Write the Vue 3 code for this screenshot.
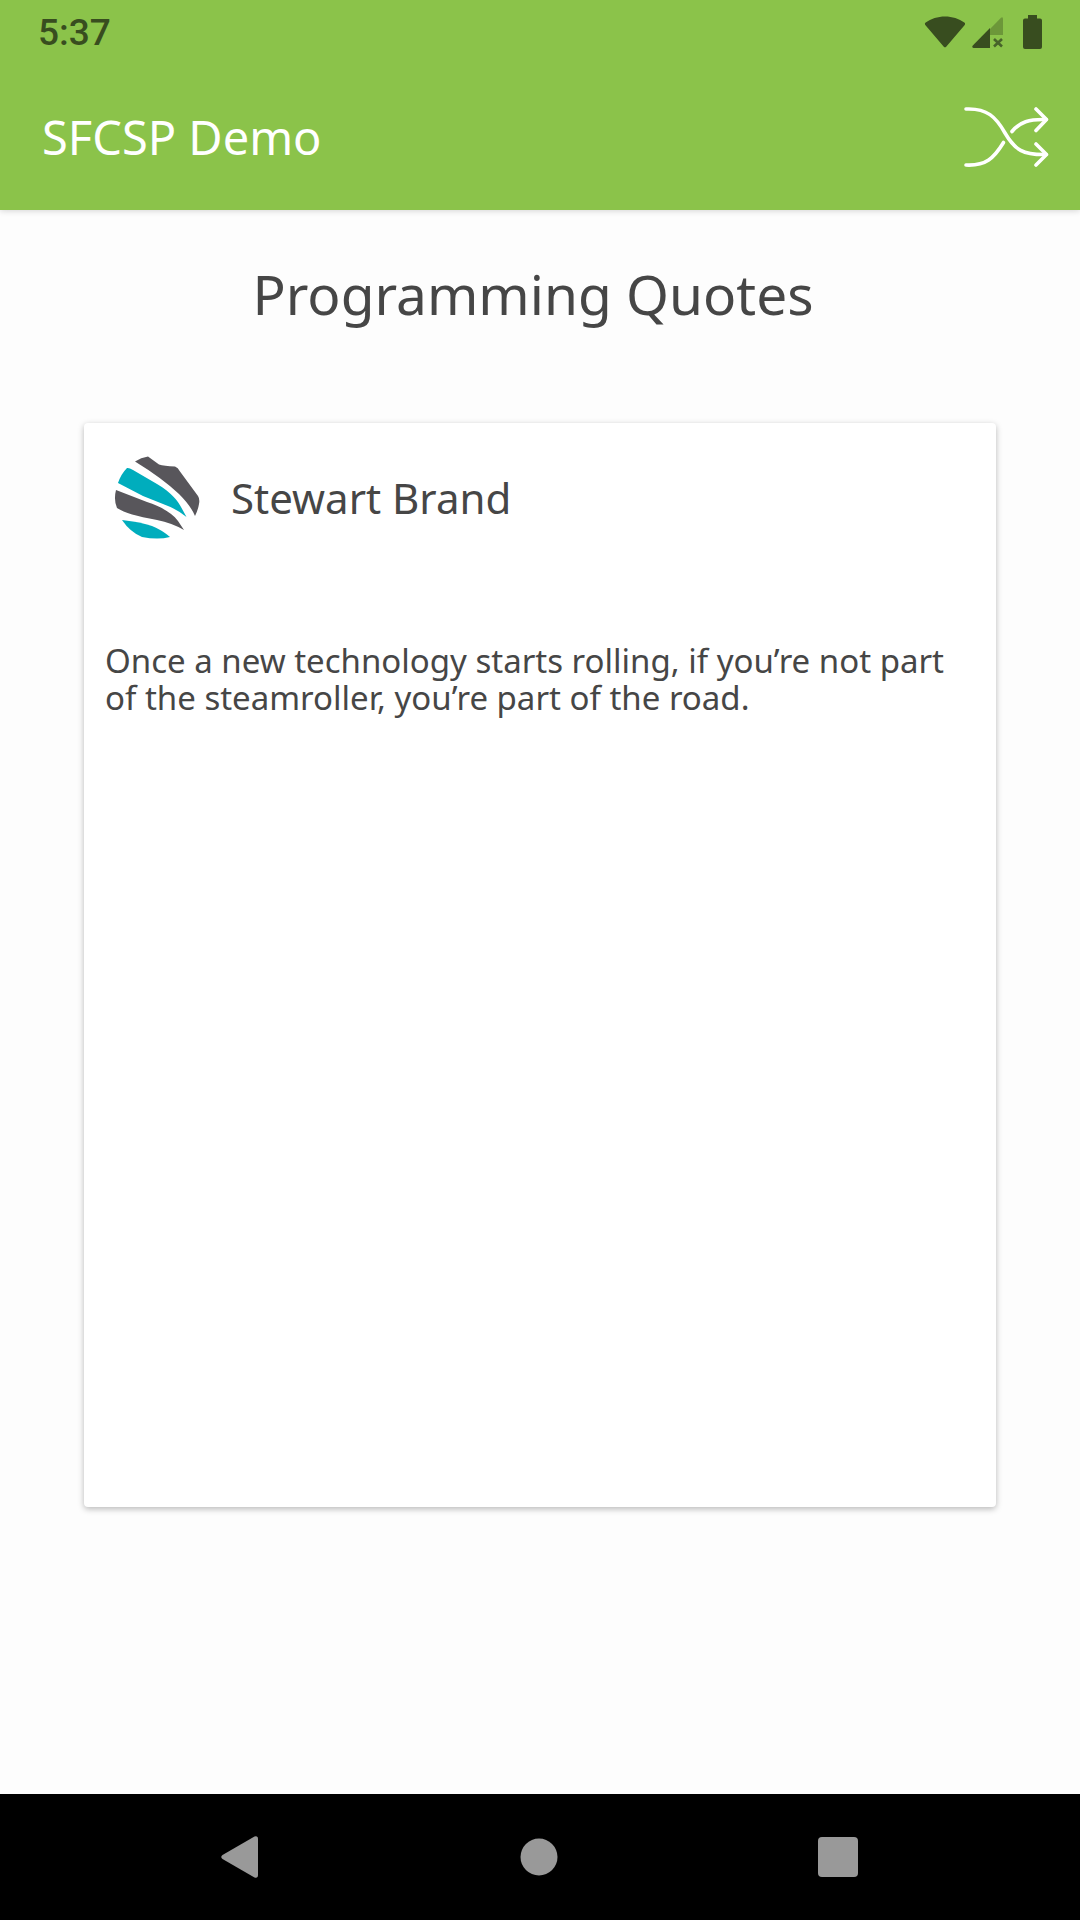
<script setup>
import { ref } from 'vue'

const quotes = [
  {
    author: 'Stewart Brand',
    text: 'Once a new technology starts rolling, if you’re not part of the steamroller, you’re part of the road.',
  },
]
const current = ref(0)

function shuffle() {
  current.value = Math.floor(Math.random() * quotes.length)
}
</script>

<template>
  <div class="screen">
    <header class="top">
      <div class="status">
        <time class="clock">5:37</time>
        <div class="indicators">
          <svg width="42" height="32" viewBox="0 0 42 32" aria-label="Wi-Fi">
            <path d="M1.5 9.2C.6 8.4.7 7.2 1.7 6.6C7 2.7 13.8 .5 21 .5S35 2.7 40.3 6.6C41.3 7.2 41.4 8.4 40.5 9.2L22.2 30.7Q21 32 19.8 30.7Z" fill="#384d1f" />
          </svg>
          <svg width="31" height="32" viewBox="0 0 31 32" aria-label="No mobile data">
            <path d="M18 13L29 1.8Q31 .5 31 3V19H18Z" fill="#6c9739" />
            <path d="M18 12V32H1.5Q-.6 31.5 .8 29.5Z" fill="#384d1f" />
            <path d="M22 23L30 30.5M30 23L22 30.5" stroke="#47632a" stroke-width="2.6" fill="none" />
          </svg>
          <svg width="19" height="34" viewBox="0 0 19 34" aria-label="Battery full">
            <path d="M5 0H14V3.5H17Q19 3.5 19 5.5V32Q19 34 17 34H2Q0 34 0 32V5.5Q0 3.5 2 3.5H5Z" fill="#384d1f" />
          </svg>
        </div>
      </div>
      <div class="app-bar">
        <h1 class="app-name">SFCSP Demo</h1>
        <button class="shuffle" type="button" aria-label="Shuffle quote" @click="shuffle">
          <svg width="86" height="62" viewBox="0 0 86 62">
            <g fill="none" stroke="#fff" stroke-width="3.6" stroke-linecap="round" stroke-linejoin="round">
              <path d="M3 3C24 2 33 11 42 27C52 44 60 49 83 48.5" />
              <path d="M3 59C23 60 31 52 40.5 36.5" />
              <path d="M49 25.5C57 16 66 13 83 13.5" />
              <path d="M73 3L83.5 13.5L73 24.5" />
              <path d="M73 38L83.5 48.5L73 59" />
            </g>
          </svg>
        </button>
      </div>
    </header>

    <main class="content">
      <h2 class="title">Programming Quotes</h2>
      <article class="card">
        <div class="author">
          <svg class="logo" width="86" height="84" viewBox="0 0 86 84" aria-hidden="true">
            <g fill="#58565b">
              <path d="M21 5.5Q27 1.5 34 .5L45 8.5Q50 10 61 10.5Q64 11.500 66 15.5L84 40Q86 43 85 48Q84 54 81 60Q77 50 65 38Q48 22 21 5.5Z" />
              <path d="M2 34L33 46C48 51 58 57 64 65L70 74Q58 67 43 64C22 60 11 57 3 52Q-.5 44 2 34Z" />
            </g>
            <g fill="#00adbd">
              <path d="M13 12Q15 11.5 19 14L43 28C58 37 64 45 67 51L72.5 61Q63 53 49 48L29 40L4 27Q7 18 13 12Z" />
              <path d="M8 64Q27 66 38 70Q48 74 56 81Q44 84 28 81Q16 76 8 64Z" />
            </g>
          </svg>
          <h3 class="name">{{ quotes[current].author }}</h3>
        </div>
        <p class="quote">{{ quotes[current].text }}</p>
      </article>
    </main>

    <nav class="system-nav" aria-label="System navigation">
      <button type="button" aria-label="Back">
        <svg width="38" height="42" viewBox="0 0 38 42">
          <path d="M1.5 19L33.5 .5Q37 -.5 37 3V39Q37 42.5 33.5 41.5L1.5 23Q-1 21 1.5 19Z" fill="#999" />
        </svg>
      </button>
      <button type="button" aria-label="Home">
        <svg width="38" height="38" viewBox="0 0 38 38"><circle cx="19" cy="19" r="18.5" fill="#999" /></svg>
      </button>
      <button type="button" aria-label="Recent apps">
        <svg width="40" height="40" viewBox="0 0 40 40"><rect width="40" height="40" rx="4" fill="#999" /></svg>
      </button>
    </nav>
  </div>
</template>

<style>
body {
  margin: 0;
  background: #fdfdfd;
}
</style>

<style scoped>
.screen {
  display: flex;
  flex-direction: column;
  min-height: 100vh;
  background: #fdfdfd;
  color: #464646;
  font-family: "Noto Sans", "Open Sans", sans-serif;
}

h1,
h2,
h3,
p {
  margin: 0;
  font-weight: 400;
}

button {
  padding: 0;
  border: 0;
  background: none;
  cursor: pointer;
}

svg {
  display: block;
}

.top {
  background: #8bc34a;
  box-shadow: 0 1px 6px rgba(0, 0, 0, 0.16);
}

.status {
  display: flex;
  align-items: center;
  justify-content: space-between;
  height: 64px;
  padding: 0 38px;
}

.clock {
  padding-top: 2px;
  color: #384d1f;
  font: 500 37px/66px Roboto, sans-serif;
}

.indicators {
  display: flex;
  align-items: center;
  gap: 6px;
}

.indicators svg:last-child {
  margin-left: 14px;
}

.app-bar {
  display: flex;
  align-items: center;
  justify-content: space-between;
  height: 146px;
  padding: 0 31px 0 42px;
}

.app-name {
  color: #fff;
  font-size: 47px;
  line-height: 64px;
}

.content {
  display: flex;
  flex: 1;
  flex-direction: column;
  padding: 44px 84px 287px;
}

.title {
  padding-right: 14px;
  margin-bottom: 89px;
  font-size: 55px;
  line-height: 80px;
  text-align: center;
}

.card {
  flex: 1;
  padding: 33px 21px;
  border-radius: 4px;
  background: #fff;
  box-shadow: 0 2px 6px rgba(0, 0, 0, 0.28);
}

.author {
  display: flex;
  align-items: center;
  gap: 31px;
  margin-bottom: 102px;
  padding-left: 9px;
}

.name {
  font-size: 42px;
  line-height: 84px;
}

.quote {
  font-size: 33px;
  line-height: 37px;
}

.system-nav {
  display: flex;
  align-items: center;
  justify-content: center;
  height: 126px;
  padding-right: 2px;
  background: #000;
}

.system-nav button {
  display: flex;
  justify-content: center;
  width: 299px;
}
</style>
